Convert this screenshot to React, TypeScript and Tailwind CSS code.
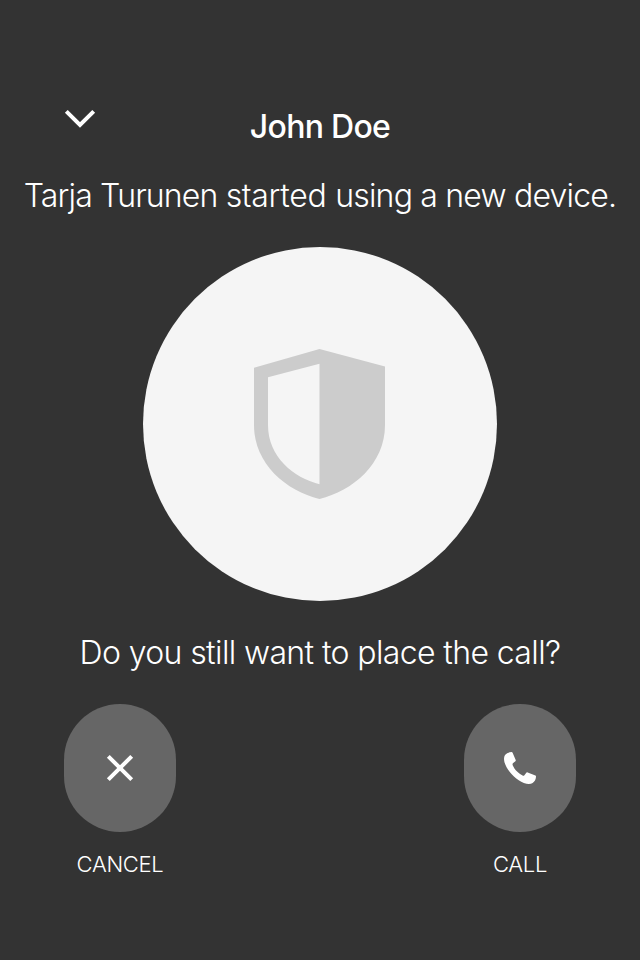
import type { ReactNode } from "react";

function Action({ label, children }: { label: string; children: ReactNode }) {
  return (
    <div className="flex w-28 flex-col items-center">
      <button aria-label={label} className="flex h-32 w-28 items-center justify-center rounded-full bg-[#666666]">
        {children}
      </button>
      <span className="mt-4 text-[22px] leading-8 font-light tracking-[-0.3px] whitespace-nowrap">{label}</span>
    </div>
  );
}

export default function App() {
  return (
    <main className="flex h-[960px] w-[640px] flex-col items-center overflow-hidden bg-[#333333] font-['Inter','Liberation_Sans',sans-serif] text-white">
      <header className="mt-[106px] grid h-10 w-full grid-cols-[160px_1fr_160px] items-start">
        <button aria-label="Minimize" className="flex h-10 items-start justify-center">
          <svg width="32" height="24" viewBox="0 0 32 24" fill="none" stroke="white" strokeWidth="4">
            <path d="M2.3 5.3 16 19 29.7 5.3" />
          </svg>
        </button>
        <h1 className="pt-px text-center text-[32px] leading-10 font-medium tracking-[-0.7px] whitespace-nowrap">John Doe</h1>
      </header>
      <p className="mt-[30px] text-[32px] leading-10 font-light whitespace-nowrap">
        <span className="tracking-[-0.85px]">Tarja Turunen </span>
        <span className="tracking-[-0.3px]">started </span>
        <span className="tracking-[-0.8px]">using a new device.</span>
      </p>
      <div className="mt-[31px] flex h-[354px] w-[354px] shrink-0 items-center justify-center rounded-full bg-[#f5f5f5]">
        <svg width="132" height="150" viewBox="0.5 0 132 150" fill="#cccccc">
          <path fillRule="evenodd" d="M66 0 131.5 17.5V76C131.5 115 99 142 66 150 33 142 .5 115 .5 76V18.7ZM66 14.7 14.5 28.2V76C14.5 108 40 128.5 66 135.3Z" />
        </svg>
      </div>
      <p className="mt-8 text-[32px] leading-10 font-light tracking-[-0.62px] whitespace-nowrap">
        Do you still want to place the call?
      </p>
      <div className="mt-[31px] flex w-full justify-between px-16">
        <Action label="CANCEL">
          <svg width="28" height="28" viewBox="0 0 28 28" fill="none" stroke="white" strokeWidth="4">
            <path d="m2.3 2.3 23.4 23.4M25.7 2.3 2.3 25.7" />
          </svg>
        </Action>
        <Action label="CALL">
          <svg width="32" height="32" viewBox="0 0 32 32" fill="white">
            <path d="M7.6 0Q8.3 0 8.6.7L11.7 8.1Q11.9 8.8 11.4 9.2L8.9 11.3Q8.3 12 8.7 13.2C10.5 17.5 14.5 21.5 19 23.7Q19.8 23.9 20.4 23.2L22.5 20.6Q23 20.1 23.7 20.4L31.4 23.6Q32.1 24 32 24.8 31.7 29 28.6 31.1 26.6 32.3 22.5 31.8C13 29.5 3 19 .4 10Q-.6 5.5 1 3 3.2.2 7.6 0Z" />
          </svg>
        </Action>
      </div>
    </main>
  );
}
